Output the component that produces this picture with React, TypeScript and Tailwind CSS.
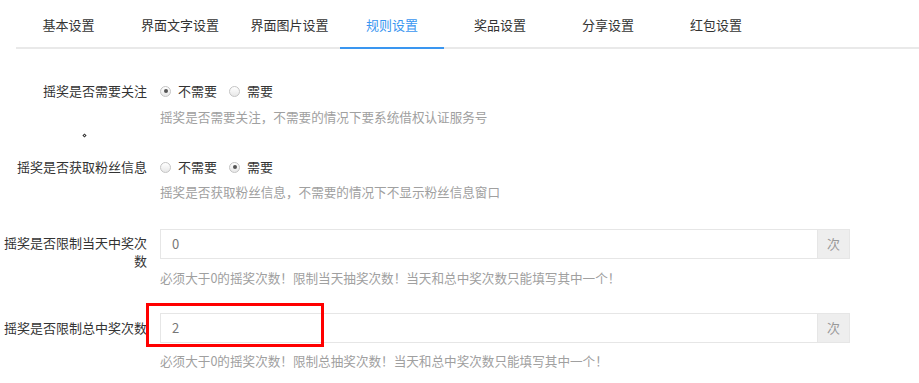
import React from 'react';

const TABS = [
  { label: '基本设置', w: 'w-[105px]' },
  { label: '界面文字设置', w: 'w-[118px]' },
  { label: '界面图片设置', w: 'w-[101px]' },
  { label: '规则设置', w: 'w-[104px]', active: true },
  { label: '奖品设置', w: 'w-[112px]' },
  { label: '分享设置', w: 'w-[104px]' },
  { label: '红包设置', w: 'w-[112px]' },
];

function Radio({ checked, label }: { checked?: boolean; label: string }) {
  return (
    <span className="flex items-center">
      <span className="w-[11px] h-[11px] rounded-full border border-[#c4c4c4] bg-gradient-to-b from-white to-[#e8e8e8] flex items-center justify-center">
        {checked && <span className="w-[4px] h-[4px] rounded-full bg-[#555]" />}
      </span>
      <span className="ml-[7px] text-[#333]">{label}</span>
    </span>
  );
}

function Help({ children }: { children: React.ReactNode }) {
  return <div className="leading-[20px] text-[12.6px] text-[#a0a0a0]">{children}</div>;
}

function NumberInput({ value }: { value: string }) {
  return (
    <div className="flex w-[690px] h-[30px]">
      <div className="flex-1 border border-[#e6e6e6] flex items-center pl-[11px] text-[#777]">{value}</div>
      <div className="w-[32px] bg-[#eeeeee] border border-l-0 border-[#e6e6e6] flex items-center justify-center text-[#999]">
        次
      </div>
    </div>
  );
}

export default function App() {
  return (
    <div
      className="relative w-[919px] h-[383px] overflow-hidden bg-white text-[13px]"
      style={{ fontFamily: '"Noto Sans CJK SC", "Noto Sans", sans-serif' }}
    >
      <div className="ml-[16px] flex h-[49px] border-b-2 border-[#e9e9e9]">
        {TABS.map((t) => (
          <div
            key={t.label}
            className={`${t.w} flex items-center justify-center pt-[3px] ${
              t.active ? 'text-[#3a96f0] border-b-2 border-[#3a96f0] -mb-[2px]' : 'text-[#333]'
            }`}
          >
            {t.label}
          </div>
        ))}
      </div>

      <div className="grid grid-cols-[147px_1fr] gap-x-[13px]">
        {/* 关注 */}
        <div className="mt-[32px] text-right leading-[20px] text-[#333]">摇奖是否需要关注</div>
        <div className="mt-[32px]">
          <div className="flex items-center h-[20px] gap-[12px]">
            <Radio checked label="不需要" />
            <Radio label="需要" />
          </div>
          <div className="mt-[6px]">
            <Help>摇奖是否需要关注，不需要的情况下要系统借权认证服务号</Help>
          </div>
        </div>

        <div className="h-[30px] flex items-start pt-[7px] pl-[83px]">
          <span className="w-[3px] h-[3px] rotate-45 border border-[#333]" />
        </div>
        <div />

        {/* 粉丝信息 */}
        <div className="text-right leading-[20px] text-[#333]">摇奖是否获取粉丝信息</div>
        <div>
          <div className="flex items-center h-[20px] gap-[12px]">
            <Radio label="不需要" />
            <Radio checked label="需要" />
          </div>
          <div className="mt-[5px]">
            <Help>摇奖是否获取粉丝信息，不需要的情况下不显示粉丝信息窗口</Help>
          </div>
        </div>

        {/* 当天中奖次数 */}
        <div className="mt-[27px] pt-[5px] text-right leading-[18px] text-[#333]">摇奖是否限制当天中奖次数</div>
        <div className="mt-[27px]">
          <NumberInput value="0" />
          <div className="mt-[9px]">
            <Help>必须大于0的摇奖次数！限制当天抽奖次数！当天和总中奖次数只能填写其中一个！</Help>
          </div>
        </div>

        {/* 总中奖次数 */}
        <div className="mt-[25px] pt-[6px] text-right leading-[18px] text-[#333]">摇奖是否限制总中奖次数</div>
        <div className="mt-[25px]">
          <NumberInput value="2" />
          <div className="mt-[8px]">
            <Help>必须大于0的摇奖次数！限制总抽奖次数！当天和总中奖次数只能填写其中一个！</Help>
          </div>
        </div>
      </div>

      <div className="absolute left-[146px] top-[303px] w-[178px] h-[44px] border-[3px] border-[#ff0000]" />
    </div>
  );
}
